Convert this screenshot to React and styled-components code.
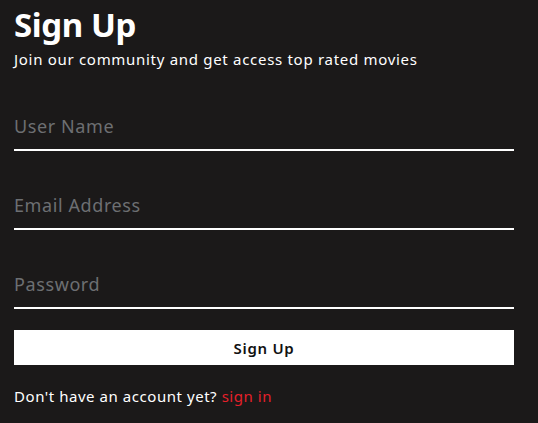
import styled, { createGlobalStyle } from 'styled-components'

const GlobalStyle = createGlobalStyle`
  html, body {
    margin: 0;
    padding: 0;
    background: #1b1919;
  }
  * {
    box-sizing: border-box;
  }
`

const Page = styled.div`
  width: 538px;
  height: 423px;
  background: #1b1919;
  padding: 5px 24px 0 14px;
  font-family: 'Noto Sans', 'Open Sans', sans-serif;
  color: #fff;
`
const Title = styled.h1`
  margin: 0;
  font-size: 33px;
  font-weight: 700;
  line-height: 40px;
  letter-spacing: -0.4px;
`
const Subtitle = styled.p`
  margin: 3px 0 0;
  font-size: 15px;
  line-height: 22px;
  letter-spacing: 0.7px;
`
const Form = styled.form`
  display: flex;
  flex-direction: column;
  gap: 31px;
  margin-top: 33px;
`
const Input = styled.input`
  width: 100%;
  height: 48px;
  padding: 0;
  border: none;
  border-bottom: 2px solid #fff;
  outline: none;
  background: transparent;
  color: #fff;
  font-family: inherit;
  font-size: 18px;
  letter-spacing: 0.6px;

  &::placeholder {
    color: #6d6f72;
  }
`
const Button = styled.button`
  margin-top: -10px;
  height: 35px;
  border: none;
  background: #fff;
  color: #111;
  font-family: inherit;
  font-size: 15px;
  font-weight: 600;
  letter-spacing: 0.7px;
  cursor: pointer;
`
const Footer = styled.p`
  margin: 20px 0 0;
  font-size: 15px;
  line-height: 22px;
  letter-spacing: 0.55px;
`
const Link = styled.a`
  color: #e5202a;
  text-decoration: none;
`

const App = () => {
  return (
    <Page>
      <GlobalStyle />
      <Title>Sign Up</Title>
      <Subtitle>Join our community and get access top rated movies</Subtitle>
      <Form onSubmit={(e) => e.preventDefault()}>
        <Input type="text" placeholder="User Name" />
        <Input type="email" placeholder="Email Address" />
        <Input type="password" placeholder="Password" />
        <Button type="submit">Sign Up</Button>
      </Form>
      <Footer>
        Don't have an account yet? <Link href="#">sign in</Link>
      </Footer>
    </Page>
  )
}

export default App
